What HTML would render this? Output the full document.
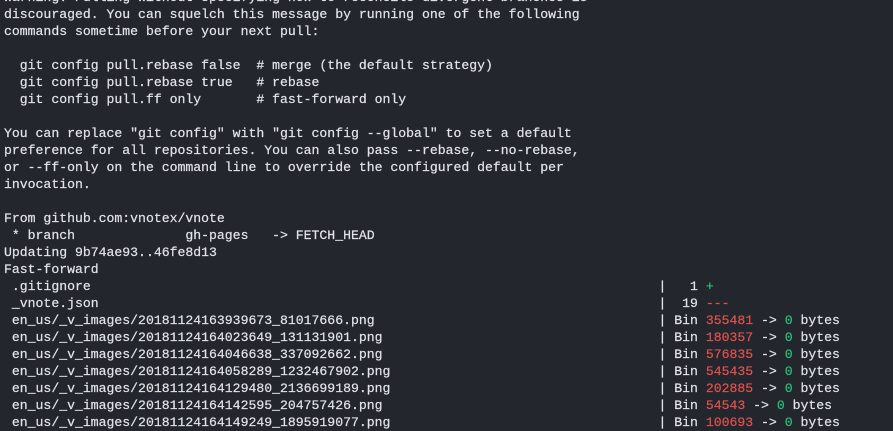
<!DOCTYPE html>
<html><head><meta charset="utf-8"><style>
html,body{margin:0;padding:0;background:#23262d;width:893px;height:423px;overflow:hidden}
pre{margin:0;position:absolute;left:4px;top:-11px;font-family:"Liberation Mono",monospace;font-size:13.15px;line-height:17px;color:#e2e4e8;white-space:pre;-webkit-text-stroke:0.2px #e2e4e8}
.r{color:#e0524f;-webkit-text-stroke:0.2px #e0524f}.g{color:#2fbf7a;-webkit-text-stroke:0.2px #2fbf7a}
</style></head><body><pre>warning: Pulling without specifying how to reconcile divergent branches is
discouraged. You can squelch this message by running one of the following
commands sometime before your next pull:

  git config pull.rebase false  # merge (the default strategy)
  git config pull.rebase true   # rebase
  git config pull.ff only       # fast-forward only

You can replace "git config" with "git config --global" to set a default
preference for all repositories. You can also pass --rebase, --no-rebase,
or --ff-only on the command line to override the configured default per
invocation.

From github.com:vnotex/vnote
 * branch              gh-pages   -&gt; FETCH_HEAD
Updating 9b74ae93..46fe8d13
Fast-forward
 .gitignore                                                                        |   1 <span class="g">+</span>
 _vnote.json                                                                       |  19 <span class="r">---</span>
 en_us/_v_images/20181124163939673_81017666.png                                    | Bin <span class="r">355481</span> -&gt; <span class="g">0</span> bytes
 en_us/_v_images/20181124164023649_131131901.png                                   | Bin <span class="r">180357</span> -&gt; <span class="g">0</span> bytes
 en_us/_v_images/20181124164046638_337092662.png                                   | Bin <span class="r">576835</span> -&gt; <span class="g">0</span> bytes
 en_us/_v_images/20181124164058289_1232467902.png                                  | Bin <span class="r">545435</span> -&gt; <span class="g">0</span> bytes
 en_us/_v_images/20181124164129480_2136699189.png                                  | Bin <span class="r">202885</span> -&gt; <span class="g">0</span> bytes
 en_us/_v_images/20181124164142595_204757426.png                                   | Bin <span class="r">54543</span> -&gt; <span class="g">0</span> bytes
 en_us/_v_images/20181124164149249_1895919077.png                                  | Bin <span class="r">100693</span> -&gt; <span class="g">0</span> bytes
</pre></body></html>
